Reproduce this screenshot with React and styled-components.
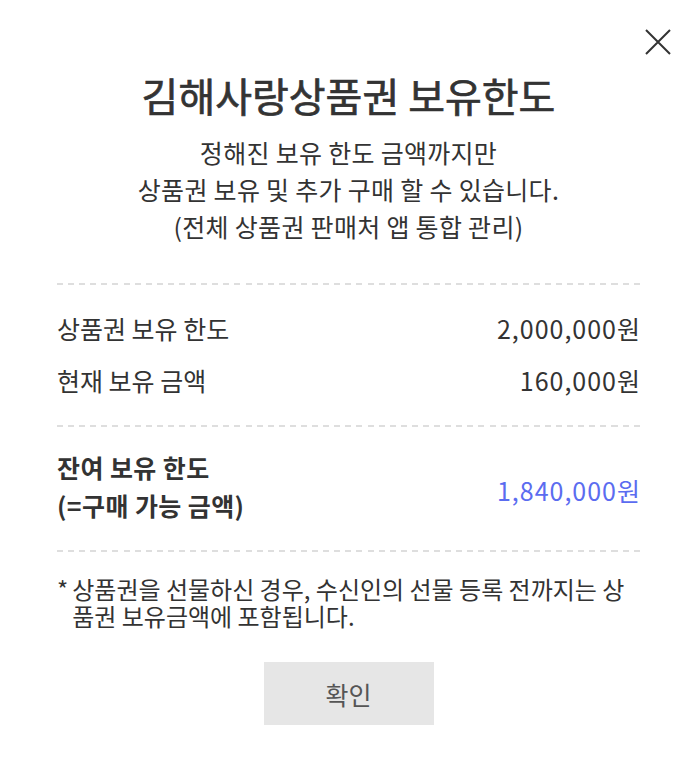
import React from 'react';
import styled, { createGlobalStyle } from 'styled-components';

const GlobalStyle = createGlobalStyle`
  html, body {
    margin: 0;
    padding: 0;
    background: #fff;
  }
  body {
    font-family: "Noto Sans CJK KR", "Noto Sans", sans-serif;
    color: #333;
  }
`

const Modal = styled.div`
  position: relative;
  width: 697px;
  box-sizing: border-box;
  padding: 70px 57px 52px;
  background: #fff;
`

const CloseButton = styled.button`
  position: absolute;
  top: 27px;
  right: 24px;
  width: 30px;
  height: 30px;
  padding: 0;
  border: none;
  background: none;
  cursor: pointer;
  display: flex;
  align-items: center;
  justify-content: center;
`

const Title = styled.h1`
  margin: 0;
  font-size: 40px;
  line-height: 50px;
  font-weight: 400;
  -webkit-text-stroke: 0.7px #333;
  color: #333;
  text-align: center;
`

const Desc = styled.p`
  margin: 14px 0 0;
  font-size: 25px;
  line-height: 37px;
  text-align: center;
  color: #333;
  letter-spacing: 0.3px;
`

const Divider = styled.div`
  height: 2px;
  margin-top: ${props => props.gap || 0}px;
  background: repeating-linear-gradient(90deg, #dedede 0 6px, transparent 6px 11.09px);
`

const Section = styled.div`
  display: flex;
  flex-direction: column;
  gap: 20px;
  padding: ${props => props.pad};
`

const Row = styled.div`
  display: flex;
  align-items: center;
  justify-content: space-between;
  font-size: 25px;
  line-height: 32px;
  font-weight: ${props => (props.strong ? 700 : 400)};
  color: #333;
`

const Label = styled.div`
  line-height: ${props => props.lh || 32}px;
  letter-spacing: ${props => props.ls || 0}px;
`

const Amount = styled.div`
  color: ${props => props.color || '#333'};
  font-weight: 400;
  letter-spacing: 1px;
  margin-right: -1px;
  padding-top: ${props => props.shift || 0}px;
`

const Note = styled.div`
  display: flex;
  gap: 4px;
  padding: 23px 14px 0 0;
  font-size: 24px;
  line-height: 27px;
  color: #333;
`

const Star = styled.span`
  flex: none;
`

const Footer = styled.div`
  display: flex;
  justify-content: center;
  margin-top: 33px;
`

const ConfirmButton = styled.button`
  width: 170px;
  height: 63px;
  border: none;
  background: #e6e6e6;
  color: #555;
  font-family: inherit;
  font-size: 25px;
  cursor: pointer;
`

export default function App() {
  return (
    <>
      <GlobalStyle />
      <Modal>
        <CloseButton aria-label="닫기">
          <svg width="26" height="26" viewBox="0 0 26 26">
            <path d="M1 1 L25 25 M25 1 L1 25" stroke="#333" strokeWidth="2" fill="none" />
          </svg>
        </CloseButton>
        <Title>김해사랑상품권 보유한도</Title>
        <Desc>
          정해진 보유 한도 금액까지만<br />
          상품권 보유 및 추가 구매 할 수 있습니다.<br />
          (전체 상품권 판매처 앱 통합 관리)
        </Desc>
        <Divider gap={38} />
        <Section pad="27px 0 29px">
          <Row>
            <Label>상품권 보유 한도</Label>
            <Amount>2,000,000원</Amount>
          </Row>
          <Row>
            <Label>현재 보유 금액</Label>
            <Amount>160,000원</Amount>
          </Row>
        </Section>
        <Divider />
        <Section pad="21px 0 26px">
          <Row strong>
            <Label lh={38} ls={0.4}>
              잔여 보유 한도<br />
              (=구매 가능 금액)
            </Label>
            <Amount color="#5b6cf0" shift={8}>1,840,000원</Amount>
          </Row>
        </Section>
        <Divider />
        <Note>
          <Star>*</Star>
          <span>상품권을 선물하신 경우, 수신인의 선물 등록 전까지는 상품권 보유금액에 포함됩니다.</span>
        </Note>
        <Footer>
          <ConfirmButton>확인</ConfirmButton>
        </Footer>
      </Modal>
    </>
  );
}
